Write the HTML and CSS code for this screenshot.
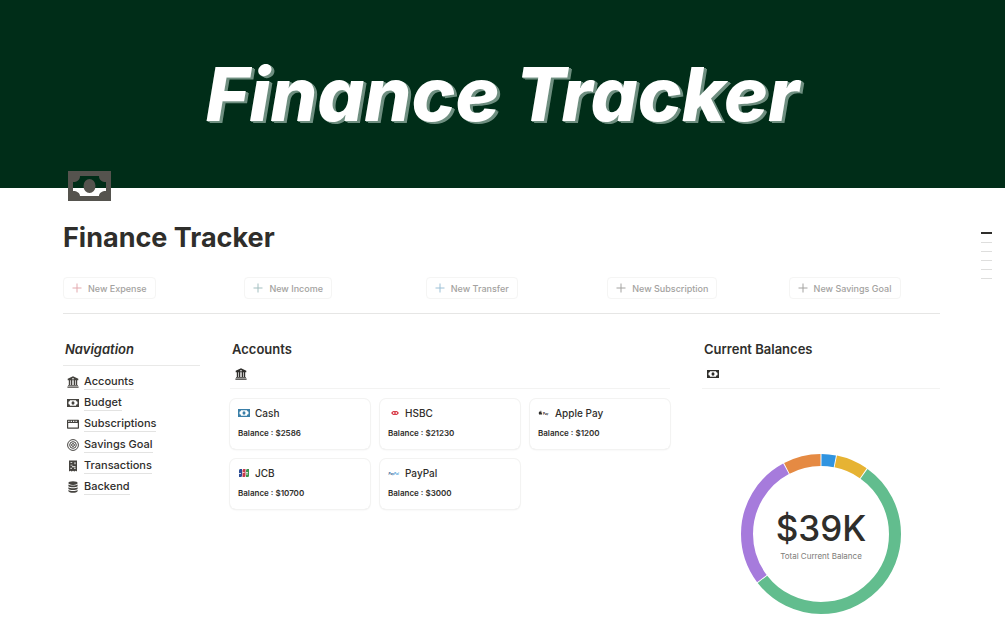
FILE: index.html
```html
<!DOCTYPE html>
<html lang="en">
<head>
    <meta charset="UTF-8">
    <meta name="viewport" content="width=device-width, initial-scale=1.0">
    <title>Finance Tracker</title>
    <link rel="stylesheet" href="styles.css">
</head>
<body>
    <!-- Shared icons -->
    <svg class="sprite" aria-hidden="true">
        <symbol id="cash" viewBox="0 0 43 30">
            <path fill-rule="evenodd" d="M0 0h43v30H0zM12 5h19c0 4 3 6 7 6v9c-4 0-7 2-7 5H12c0-3-3-5-7-5v-9c4 0 7-2 7-6z"/>
            <ellipse cx="21.500" cy="15" rx="6" ry="7"/>
        </symbol>
        <symbol id="bill" viewBox="0 0 12 12">
            <path fill-rule="evenodd" d="M0 2h12v8H0zM3 3.300C3 4.200 2.300 4.700 1.500 4.700v2.600C2.300 7.300 3 7.800 3 8.700h6c0-.9.7-1.400 1.500-1.400V4.700C9.700 4.700 9 4.200 9 3.300z"/>
            <ellipse cx="6" cy="6" rx="1.500" ry="1.800"/>
        </symbol>
        <symbol id="bank" viewBox="0 0 12 12">
            <path fill-rule="evenodd" d="M6 .3L11.300 2.800v1.500H.7V2.800zM6 2a.8.8 0 1 0 0 1.600A.8.8 0 0 0 6 2zM1.800 4.300h1.500v5.200H1.800zM4 4.300h1.300v5.200H4zM6.700 4.300H8v5.200H6.700zM8.700 4.300h1.500v5.200H8.700zM1 9.200h10v.8H1zM.4 10.500h11.200v1.200H.4z"/>
        </symbol>
        <symbol id="window" viewBox="0 0 12 12">
            <path fill-rule="evenodd" d="M1 1.700h10c.6 0 1 .4 1 1v7.100c0 .6-.4 1-1 1H1c-.6 0-1-.4-1-1V2.700c0-.6.4-1 1-1zM1.200 5v4.600h9.600V5zM1.300 2.800v1.100h1.200V2.800zM3.700 2.800v1.100h1.200V2.800zM6.100 2.800v1.100h1.200V2.800zM8.500 2.800v1.100h1.200V2.800z"/>
        </symbol>
        <symbol id="target" viewBox="0 0 12 12">
            <g fill="none" stroke="currentColor"><circle cx="6" cy="6" r="5.400"/><circle cx="6" cy="6" r="3.300"/><circle cx="6" cy="6" r="1.400"/></g>
        </symbol>
        <symbol id="receipt" viewBox="0 0 12 12">
            <path fill-rule="evenodd" d="M2 .5h8v11l-1.300-.7-1.400.7L6 10.800l-1.300.7-1.400-.7-1.300.7zM3.500 2.200v.9h1.700v-.9zM7.500 2.200v2h1v-2zM3.500 4.700v.8h2v-.8zM5 6.200v1h3.500v-1zM3.500 7.800v1.300h1.200V7.800zM7.300 7.800v1.300h1.200V7.800z"/>
        </symbol>
        <symbol id="database" viewBox="0 0 12 12">
            <ellipse cx="6" cy="2.100" rx="4.600" ry="1.800"/>
            <path d="M1.400 3.500c2 1.400 7.200 1.400 9.200 0v1.700c-1.600 1.500-7.600 1.500-9.200 0zM1.400 6.200c2 1.400 7.200 1.400 9.200 0v1.700c-1.600 1.500-7.600 1.500-9.200 0zM1.400 8.900c2 1.400 7.200 1.400 9.200 0v1.300c-1.600 2-7.600 2-9.200 0z"/>
        </symbol>
        <symbol id="plus" viewBox="0 0 10 10">
            <path d="M5 .5v9M.5 5h9" fill="none" stroke="currentColor"/>
        </symbol>
    </svg>

    <div class="banner">Finance Tracker</div>

    <div class="container">
        <svg class="page-icon"><use href="#cash"/></svg>
        <h1>Finance Tracker</h1>

        <div class="actions">
            <div><button class="btn expense"><svg><use href="#plus"/></svg>New Expense</button></div>
            <div><button class="btn income"><svg><use href="#plus"/></svg>New Income</button></div>
            <div><button class="btn transfer"><svg><use href="#plus"/></svg>New Transfer</button></div>
            <div><button class="btn"><svg><use href="#plus"/></svg>New Subscription</button></div>
            <div><button class="btn"><svg><use href="#plus"/></svg>New Savings Goal</button></div>
        </div>

        <div class="columns">
            <nav>
                <h2>Navigation</h2>
                <ul>
                    <li><a href="#"><svg><use href="#bank"/></svg><span>Accounts</span></a></li>
                    <li><a href="#"><svg><use href="#bill"/></svg><span>Budget</span></a></li>
                    <li><a href="#"><svg><use href="#window"/></svg><span>Subscriptions</span></a></li>
                    <li><a href="#"><svg><use href="#target"/></svg><span>Savings Goal</span></a></li>
                    <li><a href="#"><svg><use href="#receipt"/></svg><span>Transactions</span></a></li>
                    <li><a href="#"><svg><use href="#database"/></svg><span>Backend</span></a></li>
                </ul>
            </nav>

            <section>
                <h2>Accounts</h2>
                <div class="tab"><svg><use href="#bank"/></svg></div>
                <div class="cards">
                    <div class="card">
                        <h3><svg class="blue"><use href="#bill"/></svg>Cash</h3>
                        <p>Balance : $2586</p>
                    </div>
                    <div class="card">
                        <h3>
                            <svg viewBox="0 0 12 12">
                                <path fill="#d9404c" d="M3 6l2-2h4l2 2-2 2H5z"/>
                                <path fill="#fff" d="M5 5L7 6 5 7zM9 5L7 6l2 1z"/>
                            </svg>HSBC
                        </h3>
                        <p>Balance : $21230</p>
                    </div>
                    <div class="card">
                        <h3>
                            <svg viewBox="0 0 24 24">
                                <path d="M7.400 9.400c-1-.6-1.800 0-2.400 0s-1.400-.6-2.400 0c-2 1.400-1 5.600.8 6 .6 0 .8-.4 1.600-.4s1 .4 1.600.4c1 0 1.600-1.400 1.800-2.200-1.600-.8-1.600-3-1-3.800zM4.800 9c0-1 .6-1.800 1.600-2 0 1-.6 1.800-1.600 2z"/>
                                <text class="logo-text" x="10" y="15">Pay</text>
                            </svg>Apple Pay
                        </h3>
                        <p>Balance : $1200</p>
                    </div>
                    <div class="card">
                        <h3>
                            <svg viewBox="0 0 12 12">
                                <path fill="#2c4c94" d="M2.500 2H4v6.500c0 1-.7 1.500-1.500 1.500H1V3.500C1 2.600 1.600 2 2.500 2z"/>
                                <path fill="#c43c4c" d="M6 2h1.500v6.500c0 1-.7 1.500-1.500 1.500H4.500V3.500C4.500 2.600 5.100 2 6 2z"/>
                                <path fill="#3d934c" d="M9.500 2H11v6.500c0 1-.7 1.500-1.500 1.500H8V3.500C8 2.600 8.600 2 9.500 2z"/>
                                <path stroke="#fff" stroke-width=".8" d="M1 6.500h2M4.500 5.500h2M8 5.500h2M8 7h2"/>
                            </svg>JCB
                        </h3>
                        <p>Balance : $10700</p>
                    </div>
                    <div class="card">
                        <h3>
                            <svg viewBox="0 0 24 24">
                                <text class="logo-text paypal" x="1" y="15">Pay<tspan fill="#4aa3d8">Pal</tspan></text>
                            </svg>PayPal
                        </h3>
                        <p>Balance : $3000</p>
                    </div>
                </div>
            </section>

            <section class="balances">
                <h2>Current Balances</h2>
                <div class="tab"><svg><use href="#bill"/></svg></div>
                <div class="chart">
                    <!-- one turn of the ring = sum of all balances -->
                    <svg viewBox="0 0 160 160">
                        <g transform="rotate(-90 80 80)">
                            <circle cx="80" cy="80" r="74" pathLength="38716" stroke="#3094e0" stroke-dasharray="1120 38716" stroke-dashoffset="-40"/>
                            <circle cx="80" cy="80" r="74" pathLength="38716" stroke="#e6b333" stroke-dasharray="2506 38716" stroke-dashoffset="-1240"/>
                            <circle cx="80" cy="80" r="74" pathLength="38716" stroke="#62bd8e" stroke-dasharray="21150 38716" stroke-dashoffset="-3826"/>
                            <circle cx="80" cy="80" r="74" pathLength="38716" stroke="#a67bdc" stroke-dasharray="10620 38716" stroke-dashoffset="-25056"/>
                            <circle cx="80" cy="80" r="74" pathLength="38716" stroke="#e58a43" stroke-dasharray="2920 38716" stroke-dashoffset="-35756"/>
                        </g>
                    </svg>
                    <div class="total">
                        <strong>$39K</strong>
                        <span>Total Current Balance</span>
                    </div>
                </div>
            </section>
        </div>
    </div>

    <div class="outline">
        <i class="active"></i><i></i><i></i><i></i><i></i><i></i>
    </div>
</body>
</html>
```
FILE: styles.css
```css
* {
    box-sizing: border-box;
}
body {
    margin: 0;
    position: relative;
    font-family: Inter, sans-serif;
    color: #2f2e2b;
    background: #fff;
}
h1, h2, h3, p, ul {
    margin: 0;
    padding: 0;
}
svg {
    width: 12px;
    height: 12px;
    flex: none;
    fill: currentColor;
}
.sprite {
    position: absolute;
    width: 0;
    height: 0;
}
.banner {
    height: 188px;
    display: flex;
    align-items: center;
    justify-content: center;
    background: #002d18;
    color: #fff;
    font: italic 800 74px Inter, sans-serif;
    text-shadow: 1px 1px #6f8f80, 2px 1px #6f8f80, 3px 2px #6f8f80;
}
.container {
    padding: 0 65px 0 63px;
}
.page-icon {
    display: block;
    position: relative;
    width: 43px;
    height: 30px;
    margin: -17px 0 0 5px;
    color: #55534e;
}
h1 {
    margin-top: 20px;
    font-size: 27px;
    line-height: 34px;
    font-weight: 700;
}
.actions {
    display: grid;
    grid-template-columns: repeat(5, 1fr);
    gap: 30px;
    margin-top: 22px;
    padding-bottom: 14px;
    border-bottom: 1px solid #e6e6e5;
}
.btn {
    display: flex;
    align-items: center;
    gap: 6px;
    height: 22px;
    padding: 0 8px;
    border: 1px solid #f5f5f4;
    border-radius: 4px;
    background: #fff;
    color: #a3a2a0;
    font: 500 9px Inter, sans-serif;
    white-space: nowrap;
    cursor: pointer;
}
.btn svg {
    width: 10px;
    height: 10px;
}
.btn.expense svg {
    color: #e3a9ae;
}
.btn.income svg {
    color: #a3bfc0;
}
.btn.transfer svg {
    color: #9cc0d6;
}
.columns {
    display: grid;
    grid-template-columns: 137fr 440fr 240fr;
    gap: 30px;
    margin-top: 25px;
}
h2 {
    padding-left: 2px;
    font-size: 13px;
    line-height: 20px;
    font-weight: 600;
}
nav h2 {
    padding-bottom: 6px;
    border-bottom: 1px solid #e9e9e8;
    font-style: italic;
}
nav ul {
    list-style: none;
    padding: 5px 0 0 4px;
}
nav a {
    display: flex;
    align-items: center;
    gap: 5px;
    height: 21px;
    color: #2f2e2b;
    font-size: 11px;
    line-height: 16px;
    font-weight: 500;
    text-decoration: none;
}
nav svg {
    color: #45433f;
}
nav span {
    border-bottom: 1px solid #e3e3e2;
}
.tab {
    display: flex;
    align-items: center;
    height: 30px;
    padding-left: 5px;
    border-bottom: 1px solid #f3f3f2;
}
.cards {
    display: grid;
    grid-template-columns: repeat(3, 1fr);
    gap: 10px;
    margin-top: 10px;
}
.card {
    height: 50px;
    padding: 7px 8px;
    border-radius: 6px;
    box-shadow: 0 0 0 1px #f3f3f2, 0 1px 2px rgba(0, 0, 0, 0.08);
}
.card h3 {
    display: flex;
    align-items: center;
    gap: 5px;
    font-size: 10px;
    line-height: 14px;
    font-weight: 500;
}
.card p {
    margin-top: 7px;
    font-size: 8px;
    line-height: 12px;
    font-weight: 600;
}
.blue {
    color: #3a7fa8;
}
.logo-text {
    font-size: 6px;
    font-weight: 700;
}
.paypal {
    font-style: italic;
    fill: #2c5a94;
}
.balances {
    padding-left: 2px;
}
.chart {
    display: grid;
    justify-items: center;
    align-items: center;
    padding-top: 65px;
}
.chart svg {
    grid-area: 1 / 1;
    width: 160px;
    height: 160px;
}
.chart circle {
    fill: none;
    stroke-width: 12px;
}
.total {
    grid-area: 1 / 1;
    display: flex;
    flex-direction: column;
    align-items: center;
}
.total strong {
    font-size: 35px;
    line-height: 44px;
    font-weight: 500;
}
.total span {
    color: #7d7c78;
    font-size: 8px;
    line-height: 12px;
}
/* page outline over the right edge */
.outline {
    position: absolute;
    top: 232px;
    right: 13px;
    display: grid;
    gap: 8px;
}
.outline i {
    width: 11px;
    height: 1px;
    background: #dededd;
}
.outline .active {
    height: 2px;
    background: #2f2e2b;
}
```
